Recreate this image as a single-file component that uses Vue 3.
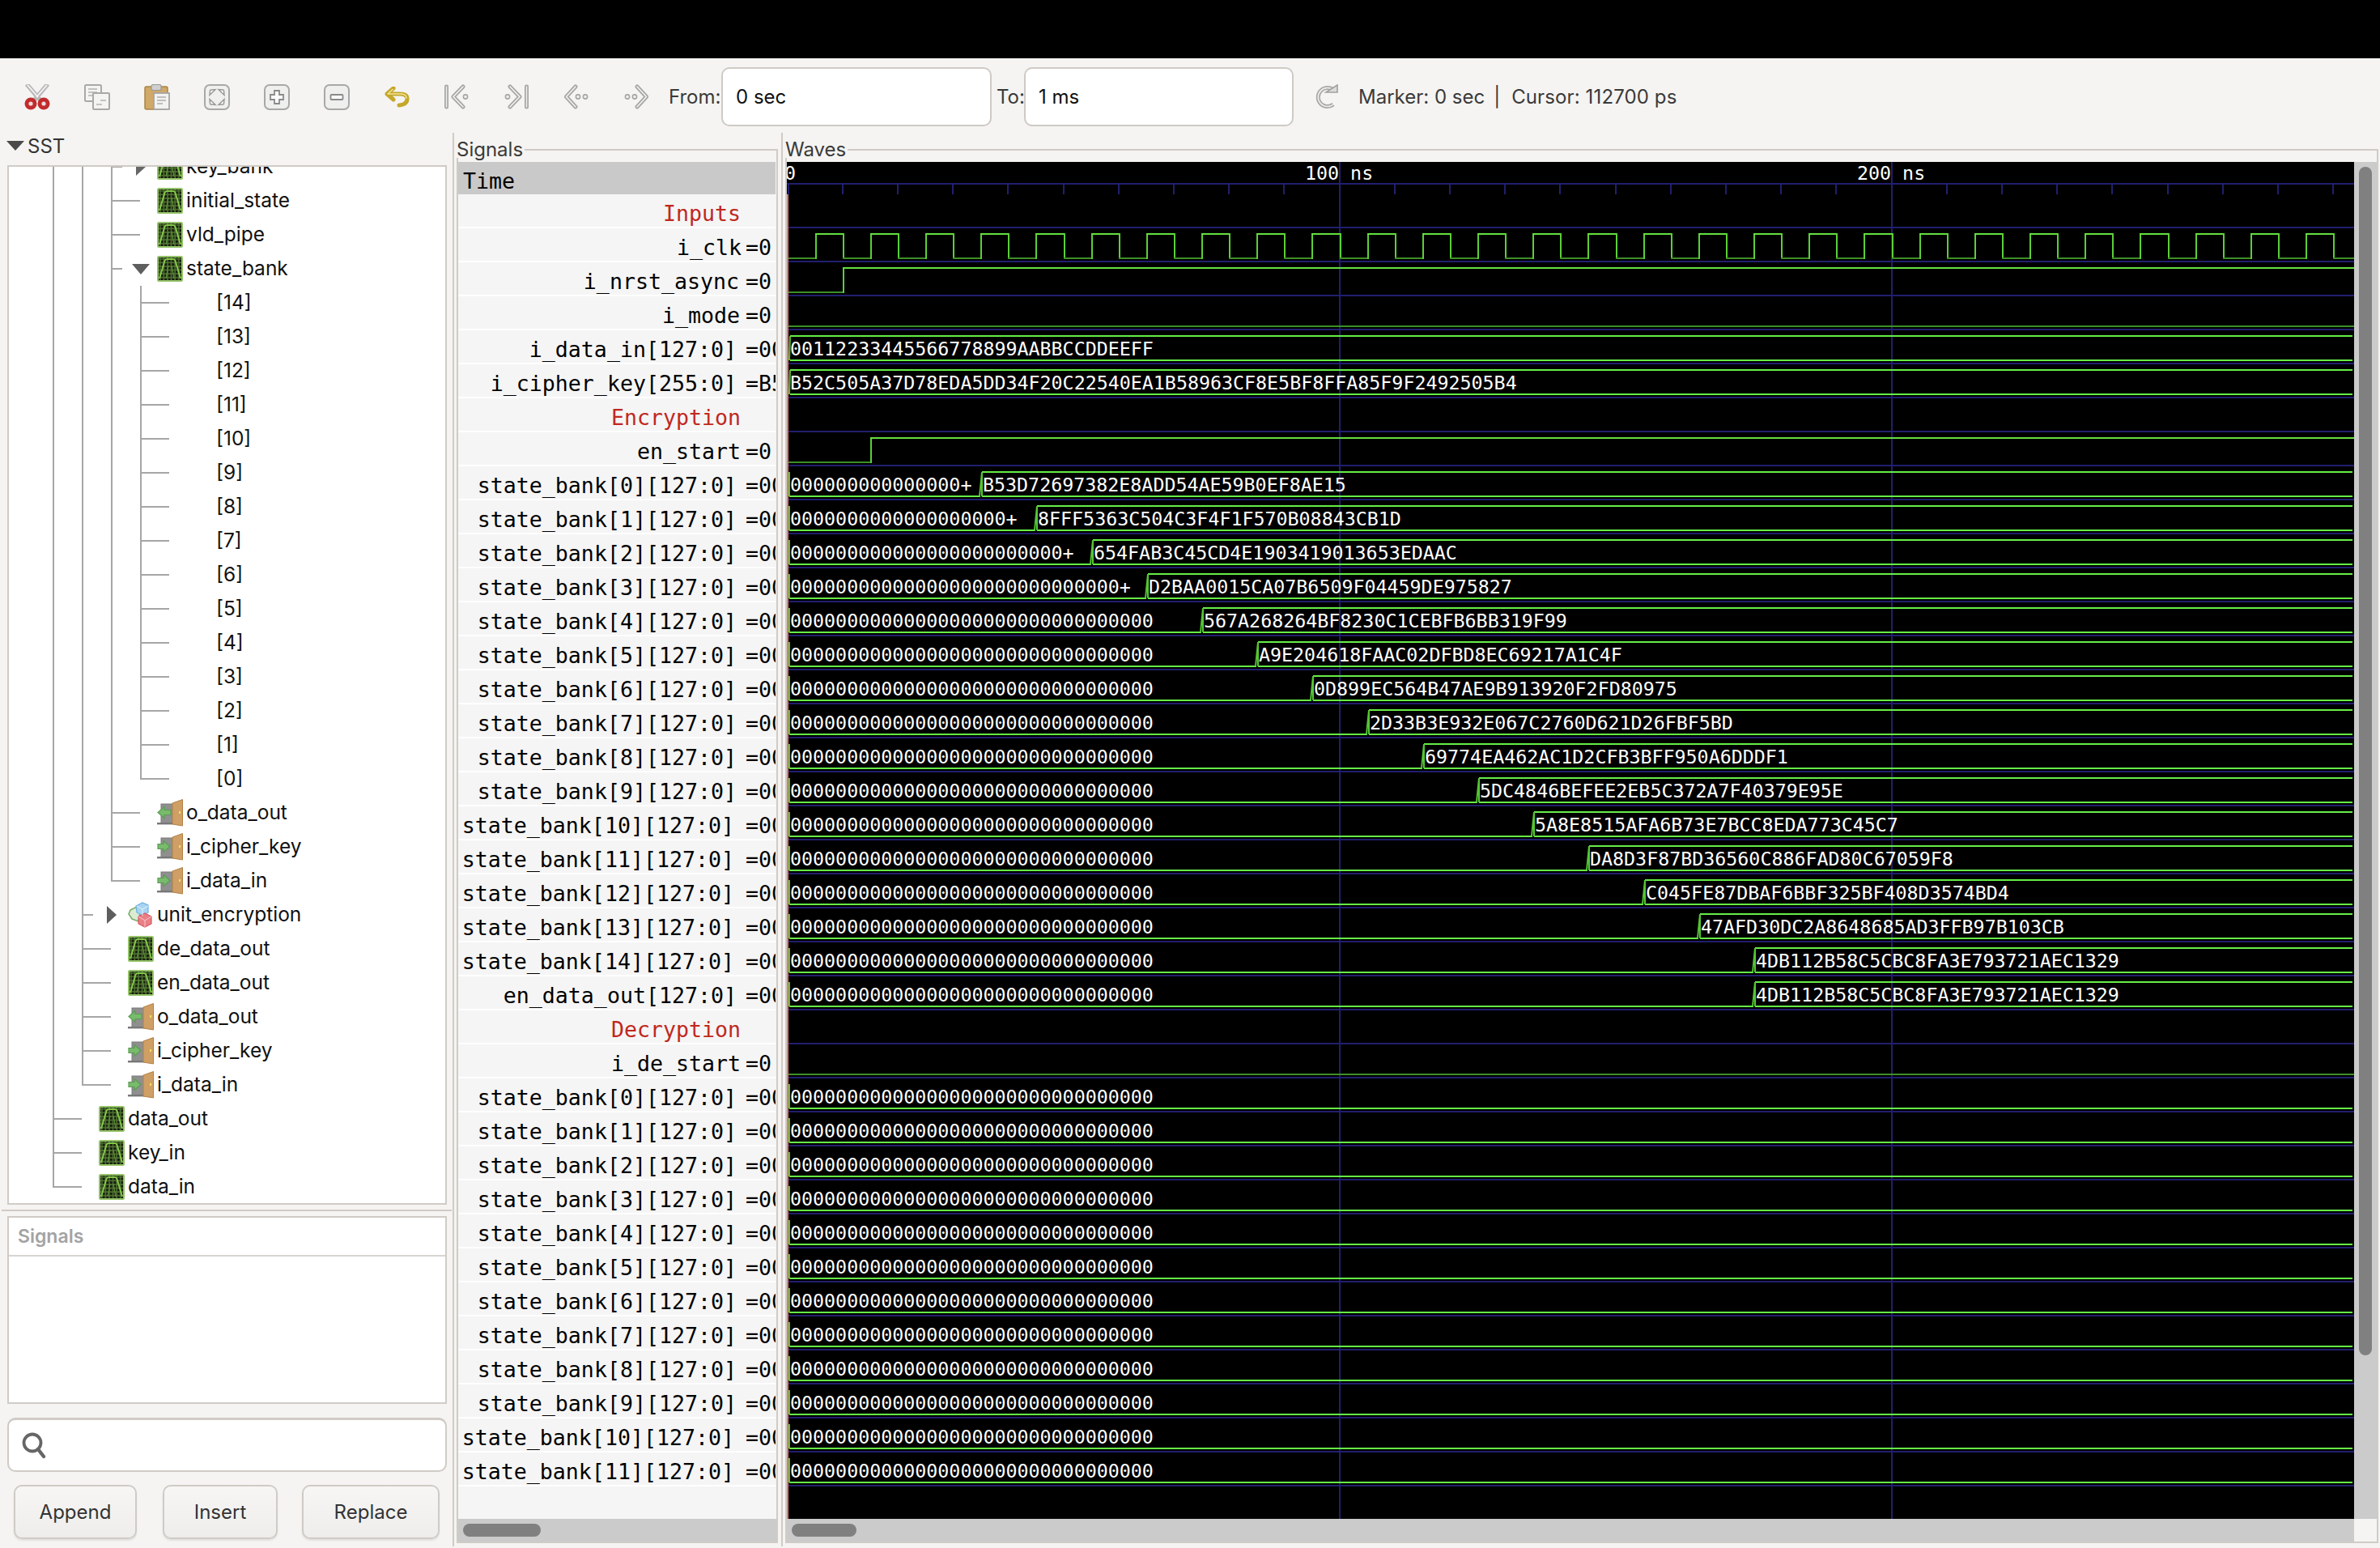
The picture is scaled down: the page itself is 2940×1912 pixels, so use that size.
<script setup>
const hex = [
  'B53D72697382E8ADD54AE59B0EF8AE15','8FFF5363C504C3F4F1F570B08843CB1D','654FAB3C45CD4E1903419013653EDAAC',
  'D2BAA0015CA07B6509F04459DE975827','567A268264BF8230C1CEBFB6BB319F99','A9E204618FAAC02DFBD8EC69217A1C4F',
  '0D899EC564B47AE9B913920F2FD80975','2D33B3E932E067C2760D621D26FBF5BD','69774EA462AC1D2CFB3BFF950A6DDDF1',
  '5DC4846BEFEE2EB5C372A7F40379E95E','5A8E8515AFA6B73E7BCC8EDA773C45C7','DA8D3F87BD36560C886FAD80C67059F8',
  'C045FE87DBAF6BBF325BF408D3574BD4','47AFD30DC2A8648685AD3FFB97B103CB','4DB112B58C5CBC8FA3E793721AEC1329'
]
const Z32 = '0'.repeat(32)
const CIPHER = 'B52C505A37D78EDA5DD34F20C22540EA1B58963CF8E5BF8FFA85F9F2492505B4'
const T0 = 972.5
const PX10 = 68.2
const tx = (ns) => Math.round(T0 + (ns / 10) * PX10)

const zeroLabel = (k) => {
  const n = [15, 19, 24, 29][k]
  return n === undefined ? Z32 : '0'.repeat(n) + '+'
}

const signals = [
  { group: 'Inputs' },
  { name: 'i_clk', val: '=0', pad: 5 },
  { name: 'i_nrst_async', val: '=0', pad: 8 },
  { name: 'i_mode', val: '=0', pad: 7 },
  { name: 'i_data_in[127:0]', val: '=00112', pad: 11, full: '00112233445566778899AABBCCDDEEFF' },
  { name: 'i_cipher_key[255:0]', val: '=B52C5', pad: 11, full: CIPHER },
  { group: 'Encryption' },
  { name: 'en_start', val: '=0', pad: 6 }
]
hex.forEach((h, k) => {
  signals.push({ name: `state_bank[${k}][127:0]`, val: '=00000', pad: k >= 10 ? 14 : 11, from: zeroLabel(k), to: h, at: 35 + 10 * k })
})
signals.push({ name: 'en_data_out[127:0]', val: '=00000', pad: 11, from: Z32, to: hex[14], at: 175 })
signals.push({ group: 'Decryption' })
signals.push({ name: 'i_de_start', val: '=0', pad: 6 })
for (let k = 0; k < 12; k++) {
  signals.push({ name: `state_bank[${k}][127:0]`, val: '=00000', pad: k >= 10 ? 14 : 11, from: Z32 })
}

const BLUE = '#211f6e'
const HI = '#63e03e'
const LO = '#3d8f27'
const VE = '#5ccf38'
const DATA = '#66ee46'
const RIGHT = 2908
const DATA_RIGHT = 2906

const grid = []
const trace = []
const slants = []
const labels = []

for (let k = 0; k <= 28; k++) {
  const x = Math.round(T0 + k * PX10) - (k === 0 ? 0 : 1)
  if (k % 10 !== 0 || k === 0) grid.push({ x, y: 226, w: 2, h: 14, c: BLUE })
}
grid.push({ x: 972, y: 226, w: 1936, h: 2, c: BLUE })
grid.push({ x: 1654, y: 200, w: 2, h: 1676, c: BLUE })
grid.push({ x: 2336, y: 200, w: 2, h: 1676, c: BLUE })
signals.forEach((_, i) => grid.push({ x: 974, y: 280 + 42 * i, w: 1934, h: 2, c: BLUE }))

const bit = (i, at) => {
  const top = 280 + 42 * (i - 1) + 8
  const bot = top + 30
  if (at === null) {
    trace.push({ x: 974, y: bot, w: RIGHT - 974, h: 2, c: LO })
    return
  }
  trace.push({ x: 974, y: bot, w: at - 974, h: 2, c: LO })
  trace.push({ x: at, y: top, w: 2, h: 32, c: VE })
  trace.push({ x: at, y: top, w: RIGHT - at, h: 2, c: HI })
}

for (let k = 0; k < 29; k++) {
  const rise = Math.round(T0 + PX10 / 2 + k * PX10)
  const fall = Math.round(T0 + (k + 1) * PX10)
  const prev = k === 0 ? 974 : Math.round(T0 + k * PX10)
  trace.push({ x: prev, y: 318, w: rise - prev, h: 2, c: LO })
  trace.push({ x: rise, y: 288, w: 2, h: 32, c: VE })
  if (rise < RIGHT) {
    trace.push({ x: rise, y: 288, w: Math.min(fall, RIGHT) - rise, h: 2, c: HI })
  }
  if (fall < RIGHT) {
    trace.push({ x: fall, y: 288, w: 2, h: 32, c: VE })
    if (k === 28) trace.push({ x: fall, y: 318, w: RIGHT - fall, h: 2, c: LO })
  }
}
bit(2, tx(10))
bit(3, null)
bit(7, tx(15))
bit(25, null)

signals.forEach((s, i) => {
  const top = 280 + 42 * (i - 1) + 8
  const bot = top + 30
  if (s.full) {
    trace.push({ x: 976, y: top, w: DATA_RIGHT - 976, h: 2, c: DATA })
    trace.push({ x: 976, y: bot, w: DATA_RIGHT - 976, h: 2, c: DATA })
    slants.push({ x1: 975, y1: bot + 1, x2: 976, y2: top + 1 })
    labels.push({ x: 976, y: top + 25, t: s.full })
  } else if (s.from) {
    const end = s.to ? tx(s.at) : DATA_RIGHT
    trace.push({ x: 975, y: bot, w: end - 975, h: 2, c: DATA })
    slants.push({ x1: 975, y1: bot + 1, x2: 975, y2: top + 1 })
    labels.push({ x: 976, y: top + 25, t: s.from })
    if (s.to) {
      trace.push({ x: end + 2, y: top, w: DATA_RIGHT - end - 2, h: 2, c: DATA })
      trace.push({ x: end + 2, y: bot, w: DATA_RIGHT - end - 2, h: 2, c: DATA })
      slants.push({ x1: end - 1, y1: bot + 1, x2: end + 2, y2: top + 1 })
      slants.push({ x1: end + 2, y1: bot + 1, x2: end + 2, y2: top + 1 })
      labels.push({ x: end + 3, y: top + 25, t: s.to })
    }
  }
})

const tree = [
  { n: 'key_bank', l: 3, i: 'wave' }, { n: 'initial_state', l: 3, i: 'wave' }, { n: 'vld_pipe', l: 3, i: 'wave' },
  { n: 'state_bank', l: 3, i: 'wave' }
]
for (let k = 14; k >= 0; k--) tree.push({ n: `[${k}]`, l: 4, i: '' })
tree.push(
  { n: 'o_data_out', l: 3, i: 'out' }, { n: 'i_cipher_key', l: 3, i: 'in' }, { n: 'i_data_in', l: 3, i: 'in' },
  { n: 'unit_encryption', l: 2, i: 'mod' }, { n: 'de_data_out', l: 2, i: 'wave' }, { n: 'en_data_out', l: 2, i: 'wave' },
  { n: 'o_data_out', l: 2, i: 'out' }, { n: 'i_cipher_key', l: 2, i: 'in' }, { n: 'i_data_in', l: 2, i: 'in' },
  { n: 'data_out', l: 1, i: 'wave' }, { n: 'key_in', l: 1, i: 'wave' }, { n: 'data_in', l: 1, i: 'wave' }
)
const indent = { 1: 111, 2: 147, 3: 183, 4: 220 }
const guides = [
  { x: 65, y: 206, w: 2, h: 1261 },
  { x: 101, y: 206, w: 2, h: 1135 },
  { x: 137, y: 206, w: 2, h: 883 },
  { x: 173, y: 353, w: 2, h: 610 }
]
const stubStart = { 1: 65, 2: 101, 3: 137, 4: 173 }
tree.forEach((t, k) => {
  const y = 206 + 42 * k - 1
  const expander = t.n === 'unit_encryption' || t.n === 'state_bank' || t.n === 'key_bank'
  guides.push({ x: stubStart[t.l], y, w: expander ? 14 : 36, h: 2 })
})
const buttons = ['cut', 'copy', 'paste', 'fit', 'in', 'out', 'undo', 'first', 'last', 'prev', 'next']
</script>

<template>
  <div class="app">
    <div class="titlebar"></div>

    <div class="toolbar">
      <div v-for="b in buttons" :key="b" class="tool">
        <svg v-if="b === 'cut'" width="32" height="32" viewBox="0 0 32 32">
          <path d="M3 0 L20 20 M29 0 L12 20" stroke="#b9b9b9" stroke-width="5.5" fill="none" />
          <path d="M4 1 L17 16 M28 1 L15 16" stroke="#f4f4f4" stroke-width="1.8" fill="none" />
          <circle cx="8" cy="24" r="7.5" fill="#c22c2c" /><circle cx="24" cy="24" r="7.5" fill="#c22c2c" />
          <circle cx="8" cy="24" r="2.6" fill="#eddcdc" /><circle cx="24" cy="24" r="2.6" fill="#eddcdc" />
        </svg>
        <svg v-else-if="b === 'copy'" width="32" height="32" viewBox="0 0 32 32">
          <rect x="1" y="1" width="20" height="20" rx="1.5" fill="#f4f4f2" stroke="#a9a9a9" stroke-width="2" />
          <path d="M5 6 H16 M5 10 H16 M5 14 H11" stroke="#b2b2b2" stroke-width="1.6" />
          <rect x="11" y="11" width="20" height="20" rx="1" fill="#f4f4f2" stroke="#a9a9a9" stroke-width="2" />
          <path d="M20 20 H27 M15 25 H22" stroke="#b2b2b2" stroke-width="1.6" />
        </svg>
        <svg v-else-if="b === 'paste'" width="32" height="32" viewBox="0 0 32 32">
          <rect x="1" y="3" width="28" height="28" rx="2" fill="#d0a868" stroke="#a98445" stroke-width="1.5" />
          <rect x="9" y="0.5" width="12" height="7" rx="2" fill="#cfcfcf" stroke="#9b9b9b" stroke-width="1.2" />
          <rect x="12" y="11" width="19" height="20" fill="#f2f2f0" stroke="#a6a6a6" stroke-width="1.8" />
          <path d="M16 16 H27 M16 20 H27 M16 24 H23" stroke="#adadad" stroke-width="1.6" />
        </svg>
        <svg v-else-if="b === 'fit'" width="32" height="32" viewBox="0 0 32 32">
          <rect x="1" y="1" width="30" height="30" rx="6" fill="#f0f0ee" stroke="#a8a8a8" stroke-width="2" />
          <path d="M7 13.5 L7.5 8 Q7.5 7 8.5 7 L14 6.5 Z M25 13.5 L24.5 8 Q24.5 7 23.5 7 L18 6.5 Z M7 18.5 L7.5 24 Q7.5 25 8.5 25 L14 25.5 Z M25 18.5 L24.5 24 Q24.5 25 23.5 25 L18 25.5 Z" fill="#f7f7f5" stroke="#989898" stroke-width="1.4" />
        </svg>
        <svg v-else-if="b === 'in'" width="32" height="32" viewBox="0 0 32 32">
          <rect x="1" y="1" width="30" height="30" rx="6" fill="#efefed" stroke="#a8a8a8" stroke-width="2" />
          <path d="M13 8 H19 V13 H24 V19 H19 V24 H13 V19 H8 V13 H13 Z" fill="#fbfbfa" stroke="#8a8a8a" stroke-width="1.8" />
        </svg>
        <svg v-else-if="b === 'out'" width="32" height="32" viewBox="0 0 32 32">
          <rect x="1" y="1" width="30" height="30" rx="6" fill="#efefed" stroke="#a8a8a8" stroke-width="2" />
          <rect x="8.5" y="13" width="15" height="6" rx="1" fill="#fbfbfa" stroke="#8a8a8a" stroke-width="1.8" />
        </svg>
        <svg v-else-if="b === 'undo'" width="32" height="26" viewBox="0 0 32 26">
          <path d="M4 9 H20 Q29 9 29 15 Q29 22 19 23 M12 2 L4 9 L12 16" stroke="#c5a72c" stroke-width="5" fill="none" stroke-linejoin="round" stroke-linecap="round" />
          <path d="M5 9 H20 Q28 9 28 14 M11 3.5 L5 9" stroke="#f1e493" stroke-width="1.6" fill="none" stroke-linecap="round" />
        </svg>
        <svg v-else width="32" height="32" viewBox="0 0 32 32">
          <g :transform="b === 'last' || b === 'next' ? 'translate(32,0) scale(-1,1)' : ''">
            <template v-if="b === 'first' || b === 'last'">
              <path d="M3.5 3 V28" stroke="#a6a6a6" stroke-width="5" stroke-linecap="round" />
              <path d="M3.5 3 V28" stroke="#ececea" stroke-width="1.6" stroke-linecap="round" />
              <path d="M24 3 L12 15.5 L24 28" stroke="#a6a6a6" stroke-width="5" fill="none" stroke-linecap="round" stroke-linejoin="round" />
              <path d="M24 3 L12 15.5 L24 28" stroke="#f2f2f0" stroke-width="1.6" fill="none" stroke-linecap="round" stroke-linejoin="round" />
              <circle cx="27" cy="15.5" r="2.6" fill="#f0f0ee" stroke="#a6a6a6" stroke-width="1.6" />
            </template>
            <template v-else>
              <path d="M15 3 L3.5 15.5 L15 28" stroke="#a6a6a6" stroke-width="5" fill="none" stroke-linecap="round" stroke-linejoin="round" />
              <path d="M15 3 L3.5 15.5 L15 28" stroke="#f2f2f0" stroke-width="1.6" fill="none" stroke-linecap="round" stroke-linejoin="round" />
              <circle cx="18" cy="15.5" r="2.6" fill="#f0f0ee" stroke="#a6a6a6" stroke-width="1.6" />
              <circle cx="27" cy="15.5" r="2.6" fill="#f0f0ee" stroke="#a6a6a6" stroke-width="1.6" />
            </template>
          </g>
        </svg>
      </div>
      <span class="lbl from">From:</span>
      <div class="field wide">0 sec</div>
      <span class="lbl to">To:</span>
      <div class="field">1 ms</div>
      <svg class="reload" width="30" height="32" viewBox="0 0 30 32">
        <path d="M23 25 A11.5 11.5 0 1 1 24 8" stroke="#a8a8a8" stroke-width="5" fill="none" />
        <path d="M23 25 A11.5 11.5 0 1 1 24 8" stroke="#efefed" stroke-width="1.6" fill="none" />
        <path d="M14 10 H28 V1 Z" fill="#dcdcda" stroke="#a0a0a0" stroke-width="1.6" />
      </svg>
      <span class="status">Marker: 0 sec<span class="bar">|</span><span class="cur">Cursor: 112700 ps</span></span>
    </div>

    <div class="main">
      <aside class="left">
        <div class="sst">
          <svg width="22" height="12" viewBox="0 0 22 12"><path d="M0 0 H22 L11 12 Z" fill="#4a4a4a" /></svg>
          <span>SST</span>
        </div>
        <div class="treebox">
          <svg class="guides" width="539" height="1280" viewBox="11 206 539 1280">
            <rect v-for="(g, k) in guides" :key="k" :x="g.x" :y="g.y" :width="g.w" :height="g.h" fill="#a6a6a6" shape-rendering="crispEdges" />
            <path d="M168 195 L180 206 L168 217 Z" fill="#666" />
            <path d="M163 326 H185 L174 339 Z" fill="#5e5e5e" />
            <path d="M132 1119 L144 1130 L132 1141 Z" fill="#5e5e5e" />
          </svg>
          <div class="treelist">
            <div v-for="(t, k) in tree" :key="k" class="treerow" :style="{ paddingLeft: indent[t.l] + 'px' }">
              <span class="ticon">
                <svg v-if="t.i === 'wave'" width="32" height="32" viewBox="0 0 32 32"><use href="#ic-wave" /></svg>
                <svg v-else-if="t.i === 'in'" width="32" height="34" viewBox="0 0 32 34"><use href="#ic-door" /><use href="#ic-arrow-in" /></svg>
                <svg v-else-if="t.i === 'out'" width="32" height="34" viewBox="0 0 32 34"><use href="#ic-door" /><use href="#ic-arrow-out" /></svg>
                <svg v-else-if="t.i === 'mod'" width="32" height="32" viewBox="0 0 32 32"><use href="#ic-mod" /></svg>
              </span>
              <span class="tname">{{ t.n }}</span>
            </div>
          </div>
        </div>
        <div class="hsash"></div>
        <div class="listbox">
          <div class="listhead">Signals</div>
        </div>
        <div class="search">
          <svg width="32" height="34" viewBox="0 0 32 34">
            <circle cx="14" cy="14" r="10.5" fill="none" stroke="#666" stroke-width="3.8" />
            <path d="M21 22 L28 31" stroke="#666" stroke-width="4.4" stroke-linecap="round" />
          </svg>
        </div>
        <div class="btns">
          <div class="btn append">Append</div>
          <div class="btn insert">Insert</div>
          <div class="btn replace">Replace</div>
        </div>
      </aside>

      <div class="vsash"></div>

      <section class="pane sigpane">
        <div class="frame sigframe">
          <span class="legend">Signals</span>
          <div class="timerow">Time</div>
          <div class="siglist">
            <div v-for="(s, i) in signals" :key="i" class="sigrow">
              <template v-if="s.group">
                <span class="name group">{{ s.group }}</span>
              </template>
              <template v-else>
                <span class="name" :style="{ paddingRight: s.pad + 'px' }">{{ s.name }}</span>
                <span class="val">{{ s.val }}</span>
              </template>
            </div>
          </div>
          <div class="hscroll"><div class="thumb sigthumb"></div></div>
        </div>
      </section>

      <div class="vsash second"></div>

      <section class="pane wavepane">
        <div class="frame waveframe">
          <span class="legend">Waves</span>
          <div class="wavegrid">
            <svg class="canvas" width="1936" height="1676" viewBox="972 200 1936 1676">
              <rect x="972" y="200" width="1936" height="1676" fill="#000" />
              <rect v-for="(r, k) in grid" :key="'g' + k" :x="r.x" :y="r.y" :width="r.w" :height="r.h" :fill="r.c" shape-rendering="crispEdges" />
              <rect x="972" y="240" width="2" height="1636" fill="#d97a72" shape-rendering="crispEdges" />
              <rect v-for="(r, k) in trace" :key="'t' + k" :x="r.x" :y="r.y" :width="r.w" :height="r.h" :fill="r.c" shape-rendering="crispEdges" />
              <line v-for="(l, k) in slants" :key="'s' + k" :x1="l.x1" :y1="l.y1" :x2="l.x2" :y2="l.y2" stroke="#55c534" stroke-width="2" />
              <text class="wt" x="969" y="222">0</text>
              <text class="wt" x="1612" y="222">100 ns</text>
              <text class="wt" x="2294" y="222">200 ns</text>
              <text v-for="(l, k) in labels" :key="'l' + k" class="wt" :x="l.x" :y="l.y">{{ l.t }}</text>
            </svg>
            <div class="vscroll"><div class="vthumb"></div></div>
            <div class="hscroll"><div class="thumb wavethumb"></div></div>
            <div class="corner"></div>
          </div>
        </div>
      </section>
    </div>

    <svg class="defs" width="0" height="0">
      <defs>
        <pattern id="wgrid" width="4.6" height="4.6" patternUnits="userSpaceOnUse">
          <rect width="4.6" height="4.6" fill="#4f7032" />
          <rect width="3" height="3" fill="#141c0c" />
        </pattern>
        <g id="ic-wave">
          <rect x="1" y="1" width="30" height="30" rx="1.5" fill="url(#wgrid)" stroke="#93c267" stroke-width="2" />
          <path d="M3 28 L9.5 6 Q10.5 4 12.5 4 H19.5 Q21.5 4 22.5 6 L29 28" stroke="#84c94a" stroke-width="2" fill="none" />
          <path d="M11 28 L14 12 M21 28 L18 12" stroke="#5c9636" stroke-width="1.2" fill="none" />
        </g>
        <g id="ic-door">
          <rect x="5" y="6" width="15" height="24" fill="#8f8f8f" stroke="#7b7b7b" stroke-width="1" />
          <rect x="0" y="29" width="20" height="2.4" fill="#777" />
          <path d="M19 5 L31.5 0.5 V33 L19 31 Z" fill="#cf9f65" stroke="#b08044" stroke-width="1" />
          <rect x="27" y="15" width="2" height="3" fill="#f0e060" />
        </g>
        <path id="ic-arrow-in" d="M1 13.5 H8 V9.5 L16 16.5 L8 23.5 V19.5 H1 Z" fill="#79bb6d" stroke="#5b9c52" stroke-width="1.2" />
        <path id="ic-arrow-out" d="M17 13.5 H9 V9.5 L1 16.5 L9 23.5 V19.5 H17 Z" fill="#79bb6d" stroke="#5b9c52" stroke-width="1.2" />
        <g id="ic-mod">
          <path d="M3 10 L11 6 L15 14 L13 24 L5 21 L1 15 Z" fill="#dcebd4" stroke="#7cae69" stroke-width="1.6" />
          <path d="M10 5 L18 1 L25 4 L25 13 L18 17 L11 13 Z" fill="#a8d4f2" stroke="#6fb1df" stroke-width="1.2" />
          <path d="M13 18 L21 14 L29 18 L29 27 L21 31 L13 27 Z" fill="#ea7f86" stroke="#d55a64" stroke-width="1.2" />
          <path d="M21 23 V31 M13 18 L21 23 L29 18" stroke="#f6c8cb" stroke-width="1" fill="none" />
          <path d="M18 9 V17 M11 5 L18 9 L25 5" stroke="#e4f2fb" stroke-width="1" fill="none" />
        </g>
      </defs>
    </svg>
  </div>
</template>

<style>
html, body { margin: 0; background: #f5f4f2; }
</style>

<style scoped>
.app {
  width: 2940px;
  height: 1912px;
  background: #f5f4f2;
  display: flex;
  flex-direction: column;
  overflow: hidden;
  font-family: Inter, "Liberation Sans", sans-serif;
  color: #222;
}
.titlebar { height: 72px; background: #000; flex: none; }
.toolbar {
  height: 92px;
  flex: none;
  box-sizing: border-box;
  padding: 3px 0 0 9px;
  display: flex;
  align-items: center;
}
.tool { width: 74px; flex: none; display: flex; justify-content: center; align-items: center; height: 32px; }
.tool svg, .ticon svg, .reload, .search svg { filter: blur(0.35px); }
.lbl { font-size: 24px; color: #3a3a3a; }
.from { width: 65px; margin-left: 3px; flex: none; }
.to { width: 34px; margin-left: 6px; flex: none; }
.field {
  width: 333px;
  height: 73px;
  box-sizing: border-box;
  border: 2px solid #cfcac5;
  border-radius: 10px;
  background: #fff;
  font-size: 24px;
  color: #111;
  display: flex;
  align-items: center;
  padding-left: 16px;
  flex: none;
}
.field.wide { width: 334px; }
.reload { margin-left: 26px; flex: none; }
.status { margin-left: 24px; font-size: 24px; color: #3a3a3a; white-space: nowrap; }
.bar { margin: 0 14px 0 11px; }
.cur { letter-spacing: 0.12px; }

.main { flex: 1; display: flex; min-height: 0; }
.left { width: 559px; flex: none; display: flex; flex-direction: column; }
.sst { height: 40px; box-sizing: border-box; padding: 0 0 8px 8px; display: flex; align-items: center; gap: 4px; font-size: 24px; color: #333; flex: none; }
.treebox {
  margin-left: 9px;
  width: 543px;
  height: 1284px;
  box-sizing: border-box;
  border: 2px solid #d0cbc6;
  background: #fff;
  position: relative;
  overflow: hidden;
  flex: none;
}
.guides { position: absolute; left: 0; top: 0; }
.treelist { margin-top: -21px; position: relative; }
.treerow { height: 42px; display: flex; align-items: center; box-sizing: border-box; }
.ticon { width: 32px; height: 34px; margin-right: 4px; display: flex; align-items: center; flex: none; }
.tname { font-size: 24.5px; color: #111; white-space: nowrap; padding-bottom: 2px; }
.hsash { height: 2px; margin: 6px 1px 6px 2px; background: #d0cbc6; flex: none; }
.listbox {
  margin-left: 9px;
  width: 543px;
  height: 232px;
  box-sizing: border-box;
  border: 2px solid #d0cbc6;
  background: #fff;
  flex: none;
}
.listhead {
  height: 48px;
  box-sizing: border-box;
  border-bottom: 2px solid #d8d4d0;
  padding-left: 11px;
  line-height: 46px;
  font-size: 23px;
  font-weight: 600;
  color: #a3a3a3;
}
.search {
  margin: 17px 0 0 9px;
  width: 543px;
  height: 67px;
  box-sizing: border-box;
  border: 2px solid #d0cbc6;
  border-top-width: 3px;
  border-radius: 10px;
  background: #fff;
  padding-left: 15px;
  display: flex;
  align-items: center;
  flex: none;
}
.btns { margin: 16px 0 0 17px; display: flex; flex: none; }
.btn {
  height: 67px;
  box-sizing: border-box;
  border: 2px solid #d0cbc6;
  border-radius: 10px;
  background: linear-gradient(#f7f6f5, #eeedeb);
  box-shadow: 0 2px 2px rgba(0, 0, 0, 0.08);
  font-size: 24px;
  color: #333;
  display: flex;
  align-items: center;
  justify-content: center;
}
.append { width: 152px; }
.insert { width: 142px; margin-left: 32px; }
.replace { width: 170px; margin-left: 30px; }

.vsash { width: 2px; margin-bottom: 2px; background: #d0cbc6; flex: none; }
.pane { box-sizing: border-box; padding-top: 20px; padding-bottom: 6px; display: flex; flex: none; }
.sigpane { width: 404px; padding-left: 3px; padding-right: 4px; }
.wavepane { width: 1973px; padding-left: 3px; padding-right: 2px; }
.frame {
  flex: 1;
  position: relative;
  border: 2px solid #d0cbc6;
  box-sizing: border-box;
  padding-top: 14px;
  display: flex;
  flex-direction: column;
  min-width: 0;
}
.legend {
  position: absolute;
  left: -2px;
  top: -18px;
  height: 27px;
  line-height: 33px;
  padding-right: 2px;
  background: #f5f4f2;
  font-size: 24px;
  color: #3a3a3a;
}
.timerow {
  height: 40px;
  flex: none;
  background: #c9c9c9;
  padding-left: 6px;
  margin-right: 1px;
  font: 26.6px/47px "DejaVu Sans Mono", monospace;
  color: #000;
}
.siglist { flex: 1; min-height: 0; margin-right: 1px; background: #f5f5f5; overflow: hidden; }
.sigrow {
  height: 42px;
  box-sizing: border-box;
  border-bottom: 2px solid #fff;
  padding-top: 4px;
  display: flex;
  font: 26.6px/40px "DejaVu Sans Mono", monospace;
  color: #000;
  white-space: nowrap;
}
.name { width: 355px; box-sizing: border-box; text-align: right; flex: none; overflow: visible; }
.group { color: #c0281e; padding-right: 6px; }
.val { width: 37px; overflow: hidden; flex: none; }
.hscroll { height: 28px; flex: none; background: #cbcbcb; box-sizing: border-box; padding-top: 6px; }
.thumb { height: 16px; border-radius: 8px; background: #808080; }
.sigthumb { width: 96px; margin-left: 6px; }
.wavegrid {
  flex: 1;
  min-height: 0;
  display: grid;
  grid-template-columns: 1936px 28px;
  grid-template-rows: 1676px 28px;
}
.canvas { display: block; }
.wt { font: 23.3px "DejaVu Sans Mono", monospace; fill: #fff; }
.vscroll { background: #cbcbcb; box-sizing: border-box; padding: 6px 6px 0; }
.vthumb { height: 1468px; border-radius: 8px; background: #808080; }
.wavethumb { width: 80px; margin-left: 6px; }
.corner { background: #f5f4f2; }
.defs { position: absolute; }
</style>
